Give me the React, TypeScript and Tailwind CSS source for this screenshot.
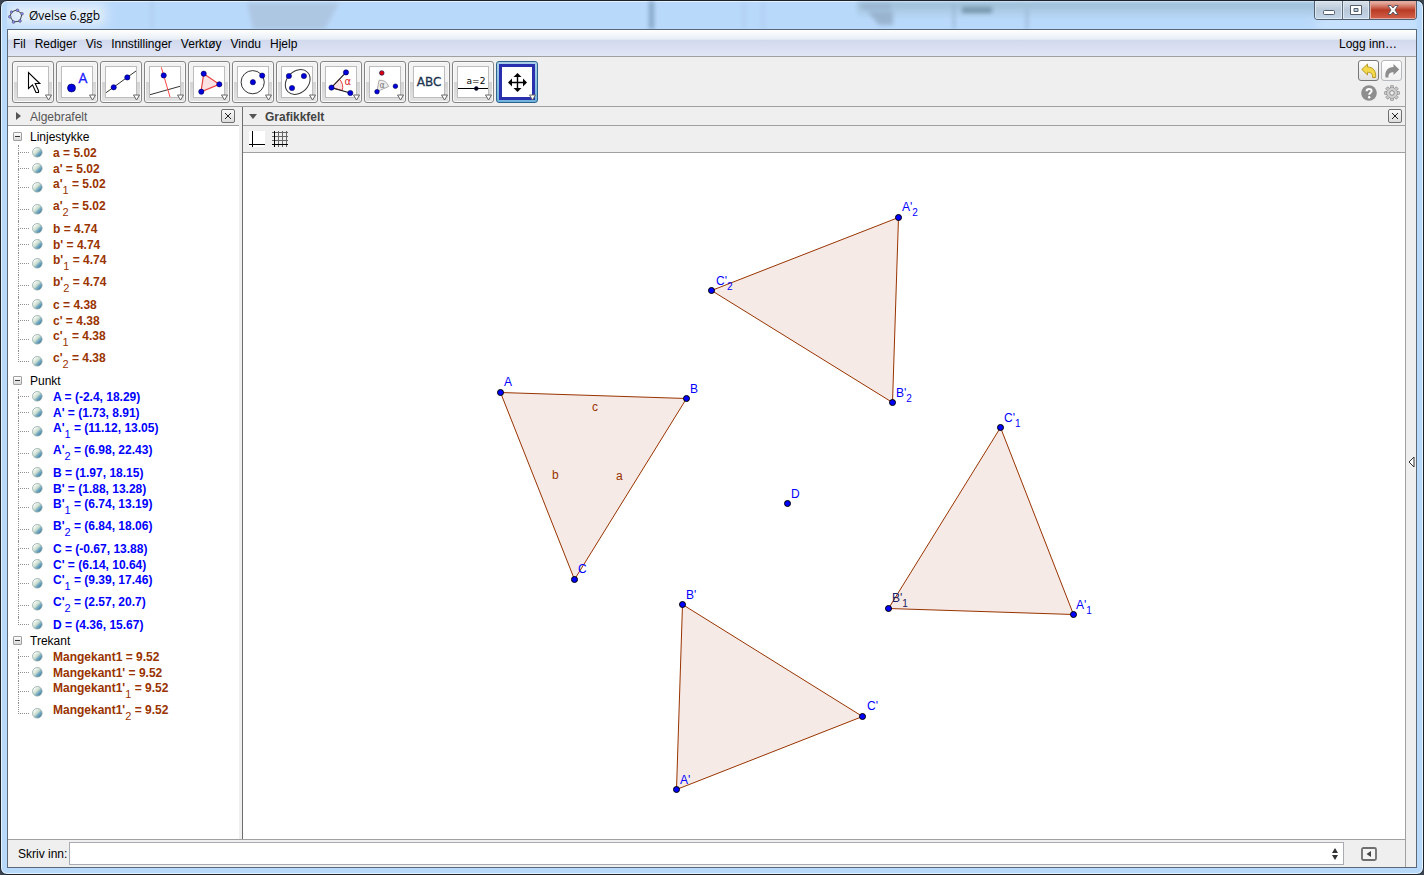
import { ReactNode } from "react";

interface TreeItem {
  name: string;
  sub?: string;
  value: string;
}

interface TreeGroup {
  title: string;
  color: string;
  items: TreeItem[];
}

interface PlotLabel {
  text: string;
  sub?: string;
  x: number;
  y: number;
  color?: string;
}

const menus = ["Fil", "Rediger", "Vis", "Innstillinger", "Verktøy", "Vindu", "Hjelp"];

const groups: TreeGroup[] = [
  {
    title: "Linjestykke",
    color: "text-[#993300]",
    items: [
      { name: "a", value: "5.02" },
      { name: "a'", value: "5.02" },
      { name: "a'", sub: "1", value: "5.02" },
      { name: "a'", sub: "2", value: "5.02" },
      { name: "b", value: "4.74" },
      { name: "b'", value: "4.74" },
      { name: "b'", sub: "1", value: "4.74" },
      { name: "b'", sub: "2", value: "4.74" },
      { name: "c", value: "4.38" },
      { name: "c'", value: "4.38" },
      { name: "c'", sub: "1", value: "4.38" },
      { name: "c'", sub: "2", value: "4.38" },
    ],
  },
  {
    title: "Punkt",
    color: "text-[#0000ff]",
    items: [
      { name: "A", value: "(-2.4, 18.29)" },
      { name: "A'", value: "(1.73, 8.91)" },
      { name: "A'", sub: "1", value: "(11.12, 13.05)" },
      { name: "A'", sub: "2", value: "(6.98, 22.43)" },
      { name: "B", value: "(1.97, 18.15)" },
      { name: "B'", value: "(1.88, 13.28)" },
      { name: "B'", sub: "1", value: "(6.74, 13.19)" },
      { name: "B'", sub: "2", value: "(6.84, 18.06)" },
      { name: "C", value: "(-0.67, 13.88)" },
      { name: "C'", value: "(6.14, 10.64)" },
      { name: "C'", sub: "1", value: "(9.39, 17.46)" },
      { name: "C'", sub: "2", value: "(2.57, 20.7)" },
      { name: "D", value: "(4.36, 15.67)" },
    ],
  },
  {
    title: "Trekant",
    color: "text-[#993300]",
    items: [
      { name: "Mangekant1", value: "9.52" },
      { name: "Mangekant1'", value: "9.52" },
      { name: "Mangekant1'", sub: "1", value: "9.52" },
      { name: "Mangekant1'", sub: "2", value: "9.52" },
    ],
  },
];

const triangles = [
  [[257.5, 239.5], [443.5, 245.5], [331.5, 426.5]],
  [[433.5, 636.5], [439.5, 451.5], [619.5, 563.5]],
  [[830.5, 461.5], [645.5, 455.5], [757.5, 274.5]],
  [[655.5, 64.5], [649.5, 249.5], [468.5, 137.5]],
];

const freePoint = [544.5, 350.5];

const labels: PlotLabel[] = [
  { text: "A", x: 261, y: 233 },
  { text: "B", x: 447, y: 240 },
  { text: "C", x: 335, y: 420 },
  { text: "D", x: 548, y: 345 },
  { text: "B'", x: 443, y: 446 },
  { text: "A'", x: 437, y: 631 },
  { text: "C'", x: 624, y: 557 },
  { text: "A'", sub: "2", x: 659, y: 58 },
  { text: "C'", sub: "2", x: 473, y: 132 },
  { text: "B'", sub: "2", x: 653, y: 244 },
  { text: "C'", sub: "1", x: 761, y: 269 },
  { text: "A'", sub: "1", x: 833, y: 456 },
  { text: "B'", sub: "1", x: 649, y: 449, color: "#202060" },
  { text: "c", x: 349, y: 258, color: "#993300" },
  { text: "b", x: 309, y: 326, color: "#993300" },
  { text: "a", x: 373, y: 327, color: "#993300" },
];

const Dot = ({ x, y, r = 2.6, fill = "#0000dd" }: { x: number; y: number; r?: number; fill?: string }) => (
  <circle cx={x} cy={y} r={r} fill={fill} stroke="#000050" strokeWidth="0.6" />
);

const tools: { label: string; active?: boolean; icon: ReactNode }[] = [
  {
    label: "Flytt",
    icon: (
      <path
        d="M16.5 11.5V27.5L20.5 23.8L24 31.5H26.5V29.5L23.2 22.5H27.8Z"
        fill="#fff"
        stroke="#000"
        strokeWidth="1.1"
      />
    ),
  },
  {
    label: "Nytt punkt",
    icon: (
      <>
        <Dot x={15.5} y={27} r={4} />
        <text x="22.5" y="21.5" fontSize="14" fontFamily="Open Sans, sans-serif" stroke="#1a1aff" strokeWidth="0.3" fill="#1a1aff">A</text>
      </>
    ),
  },
  {
    label: "Linje",
    icon: (
      <>
        <path d="M6 31.7L36 10" stroke="#333" />
        <Dot x={13.7} y={26.3} />
        <Dot x={27.3} y={16.4} />
      </>
    ),
  },
  {
    label: "Normal",
    icon: (
      <>
        <path d="M6 33.7L36 25.3" stroke="#333" />
        <path d="M17.3 6.3L26 36" stroke="#ff4444" />
        <Dot x={19.7} y={14.4} />
      </>
    ),
  },
  {
    label: "Mangekant",
    icon: (
      <>
        <path d="M15.7 12.7L31.3 23.3L13 30.7Z" fill="#fbe3e3" stroke="#e84040" strokeWidth="1.2" />
        <Dot x={15.7} y={12.7} />
        <Dot x={31.3} y={23.3} />
        <Dot x={13.3} y={30.7} />
      </>
    ),
  },
  {
    label: "Sirkel",
    icon: (
      <>
        <circle cx="20.7" cy="21.2" r="11.6" fill="none" stroke="#333" />
        <Dot x={20.9} y={21.2} />
        <Dot x={30.2} y={14.6} />
      </>
    ),
  },
  {
    label: "Ellipse",
    icon: (
      <>
        <ellipse cx="21.7" cy="21" rx="13.8" ry="10.8" transform="rotate(-45 21.7 21)" fill="none" stroke="#333" />
        <Dot x={12.9} y={15} />
        <Dot x={27.9} y={15} />
        <Dot x={16} y={27} />
      </>
    ),
  },
  {
    label: "Vinkel",
    icon: (
      <>
        <path d="M11.5 26.5L19.5 18.3A11.5 11.5 0 0 1 22.2 29.5Z" fill="#fbe3e3" stroke="#e84040" />
        <path d="M26 11.3L11.3 26.6L30.3 32" fill="none" stroke="#222" strokeWidth="1.2" />
        <text x="24.5" y="24" fontSize="10" fontFamily="DejaVu Sans, sans-serif" fill="#dd2222">α</text>
        <Dot x={11.5} y={26.6} />
        <Dot x={26} y={11.4} />
        <Dot x={30.3} y={32} />
      </>
    ),
  },
  {
    label: "Rotasjon",
    icon: (
      <>
        <path d="M13 30.5L15 19.3Q22 18.5 24.7 25.5Z" fill="#eee" stroke="#aaa" />
        <text x="15.5" y="27" fontSize="8" fontFamily="DejaVu Sans, sans-serif" fill="#777">α</text>
        <Dot x={17.8} y={12} r={2.3} fill="#dd0000" />
        <Dot x={13} y={30.7} r={2.3} />
        <Dot x={31.4} y={25.2} r={2.3} />
      </>
    ),
  },
  {
    label: "Tekst",
    icon: (
      <text x="21" y="25" textAnchor="middle" fontSize="12" fontFamily="DejaVu Sans, sans-serif" stroke="#1b3350" strokeWidth="0.3" fill="#1b3350">ABC</text>
    ),
  },
  {
    label: "Glider",
    icon: (
      <>
        <text x="24" y="23" textAnchor="middle" fontSize="9" fontFamily="DejaVu Sans, sans-serif" fill="#000">a=2</text>
        <path d="M6 27.5H36" stroke="#000" />
        <Dot x={24.3} y={27.5} r={1.9} fill="#000" />
      </>
    ),
  },
  {
    label: "Flytt grafikkfeltet",
    active: true,
    icon: (
      <>
        <path d="M13 21.5H30M21.5 13V30" stroke="#000" strokeWidth="1.4" />
        <path d="M12 21.5l4-4v8zM31 21.5l-4-4v8zM21.5 12l-4 4h8zM21.5 31l-4-4h8z" fill="#000" />
      </>
    ),
  },
];

const ToolButton = ({ label, active, icon }: { label: string; active?: boolean; icon: ReactNode }) => (
  <button
    aria-label={label}
    className={`relative grid size-[42px] place-items-center rounded-[3px] border ${
      active
        ? "border-[#2c628b] bg-linear-to-b from-[#a9cfe6] to-[#6fb4dc]"
        : "border-[#858585] bg-linear-to-b from-[#f2f2f2] from-50% via-[#d4d4d4] via-50% to-[#e2e2e2] shadow-[inset_0_0_0_1px_#fafafa]"
    }`}
  >
    <span
      className={
        active ? "size-9 border-3 border-[#2a2fae] bg-white" : "size-8 border border-[#bdbdbd] bg-white"
      }
    />
    <svg viewBox="0 0 42 42" className="absolute -top-px -left-px size-[42px]" fill="none">
      {icon}
      <path d="M33.5 34H39.5L36.5 39Z" fill="#fff" stroke="#666" />
    </svg>
  </button>
);

const CloseBox = ({ label }: { label: string }) => (
  <button
    aria-label={label}
    className="grid size-[14px] place-items-center rounded-[2px] border border-[#707070] bg-linear-to-b from-[#f8f8f8] to-[#dcdcdc]"
  >
    <svg viewBox="0 0 8 8" className="size-2" stroke="#222">
      <path d="M1 1L7 7M7 1L1 7" />
    </svg>
  </button>
);

const TreeRow = ({ item, color, last }: { item: TreeItem; color: string; last: boolean }) => (
  <li className={`flex items-start pl-[10px] ${item.sub ? "h-[22px]" : "h-4"}`}>
    <span className="flex w-[11px] flex-col self-stretch">
      <span className="h-1/2 border-b border-l border-dotted border-[#909090]" />
      <span className={`h-1/2 border-[#909090] ${last ? "" : "border-l border-dotted"}`} />
    </span>
    <button aria-label={`Vis ${item.name}${item.sub ?? ""}`} className={`ml-[3px] ${item.sub ? "mt-[5px]" : "mt-[2px]"}`}>
      <svg viewBox="0 0 11 11" className="block size-[11px]">
        <circle cx="5.3" cy="5.3" r="4.8" fill="url(#marble)" stroke="#8fa9a4" strokeWidth="0.8" />
      </svg>
    </button>
    <span className={`ml-[10px] font-bold whitespace-nowrap ${item.sub ? "leading-[15px]" : "leading-4"} ${color}`}>
      {item.name}
      {item.sub && <sub className="relative top-[6px] bottom-auto align-baseline text-[11px] leading-none font-normal">{item.sub}</sub>}
      {" = "}
      {item.value}
    </span>
  </li>
);

const AlgebraView = () => (
  <section className="flex w-[231px] shrink-0 flex-col bg-white">
    <header className="flex h-[19px] items-center border-b border-[#a0a0a0] bg-[#efefef] pr-[4px] pl-2">
      <svg viewBox="0 0 5 8" className="h-2 w-[5px]" fill="#555">
        <path d="M0 0L5 4L0 8Z" />
      </svg>
      <h2 className="ml-[9px] flex-1 pt-px text-[#555]">Algebrafelt</h2>
      <CloseBox label="Lukk algebrafelt" />
    </header>
    <div className="flex-1 pt-[3px]">
      {groups.map((group) => (
        <div key={group.title}>
          <div className="flex h-4 items-start pl-[5px]">
            <button
              aria-label={`Skjul ${group.title}`}
              className="mt-[3px] grid size-[9px] place-items-center rounded-[1px] border border-[#a0a0a0] bg-linear-to-b from-white to-[#d8d8d8]"
            >
              <span className="h-px w-[5px] bg-[#333]" />
            </button>
            <h3 className="ml-2 leading-4">{group.title}</h3>
          </div>
          <ul>
            {group.items.map((item, index) => (
              <TreeRow key={index} item={item} color={group.color} last={index === group.items.length - 1} />
            ))}
          </ul>
        </div>
      ))}
    </div>
  </section>
);

const GraphicsView = () => (
  <section className="flex min-w-0 flex-1 flex-col border-l border-[#6d6d6d] bg-white">
    <header className="flex h-[19px] shrink-0 items-center border-b border-[#a0a0a0] bg-[#efefef] pr-[3px] pl-[6px]">
      <svg viewBox="0 0 8 5" className="h-[5px] w-2" fill="#555">
        <path d="M0 0H8L4 5Z" />
      </svg>
      <h2 className="ml-2 flex-1 pt-px font-bold text-[#444]">Grafikkfelt</h2>
      <CloseBox label="Lukk grafikkfelt" />
    </header>
    <div className="flex h-[27px] shrink-0 items-center gap-[7px] border-b border-[#a0a0a0] bg-[#efefef] pl-[6px]">
      <button aria-label="Akser" className="size-4 bg-white">
        <svg viewBox="0 0 16 16" className="size-4" stroke="#000">
          <path d="M3.5 0V16M0 13.5H16" />
        </svg>
      </button>
      <button aria-label="Rutenett" className="size-4">
        <svg viewBox="0 0 16 16" className="size-4" stroke="#666">
          <path d="M6.5 0V16M10.5 0V16M14.5 0V16M0 1.5H16M0 5.5H16M0 9.5H16" />
          <path d="M2.5 0V16M0 13.5H16" stroke="#000" />
        </svg>
      </button>
    </div>
    <div className="min-h-0 flex-1">
      <svg className="block h-full w-full" fontFamily="Liberation Sans, Arial, sans-serif" fontSize="12">
        {triangles.map((points, index) => (
          <polygon key={index} points={points.join(" ")} fill="#f5eae6" stroke="#993300" />
        ))}
        {[...triangles.flat(), freePoint].map(([x, y], index) => (
          <circle key={index} cx={x} cy={y} r="3" fill="#0000ff" stroke="#000" />
        ))}
        {labels.map((label, index) => (
          <text key={index} x={label.x} y={label.y} fill={label.color ?? "#0000ff"}>
            {label.text}
            {label.sub && <tspan dy="5" fontSize="10">{label.sub}</tspan>}
          </text>
        ))}
      </svg>
    </div>
  </section>
);

const TitleBar = () => (
  <header className="relative flex h-7 shrink-0 items-start">
    {/* Blurred desktop behind the glass */}
    <svg className="absolute inset-0 h-full w-full" preserveAspectRatio="none" viewBox="0 0 1410 28">
      <defs>
        <filter id="haze" x="-20%" y="-20%" width="140%" height="140%">
          <feGaussianBlur stdDeviation="2" />
        </filter>
        <filter id="glow" x="-50%" y="-50%" width="200%" height="200%">
          <feGaussianBlur stdDeviation="6" />
        </filter>
        <linearGradient id="shade" x1="0" y1="0" x2="0" y2="1">
          <stop offset="0" stopColor="#9dbdd2" />
          <stop offset="1" stopColor="#9dbdd2" stopOpacity="0" />
        </linearGradient>
      </defs>
      <path d="M240 2H332L318 28H246Z" fill="#adc6e2" filter="url(#haze)" />
      <path d="M850 1H1330V18H850Z" fill="url(#shade)" filter="url(#haze)" />
      <g filter="url(#haze)">
        <path d="M642 0H647V28H642Z" fill="#86a6c8" />
        <path d="M855 3H884V8H855ZM860 10H886V24H872Z" fill="#98b4cf" />
        <path d="M955 6H985V12H955Z" fill="#7695ac" />
        <path d="M946 4H948V28H946ZM1019 8H1021V28H1019Z" fill="#93b2d0" />
        <path d="M736 2H738V28H736ZM755 2H757V28H755ZM144 0H146V28H144Z" fill="#a8c8ea" />
      </g>
      <g filter="url(#glow)">
        <path d="M0 3H98V24H0Z" fill="#e4effc" />
        <path d="M1310 20H1410V28H1310Z" fill="#d4e9ff" />
      </g>
    </svg>
    <div className="relative flex h-7 flex-1 items-center gap-[5px] pt-px pl-px">
      <svg viewBox="0 0 16 16" className="size-4" fill="none">
        <path d="M8.5 2L14 5.8L12 13L5.5 14L2 8.5L3.5 4Z" stroke="#444" strokeWidth="1" />
        <g fill="#8c8cff" stroke="#444" strokeWidth="0.5">
          <circle cx="9.5" cy="2.3" r="1.4" />
          <circle cx="14" cy="5.8" r="1.4" />
          <circle cx="12" cy="13" r="1.4" />
          <circle cx="5.5" cy="14" r="1.4" />
          <circle cx="1.8" cy="8.8" r="1.4" />
          <circle cx="3.5" cy="4" r="1.2" />
        </g>
      </svg>
      <h1 className="font-['Open_Sans',sans-serif] text-[12px]">Øvelse 6.ggb</h1>
    </div>
    <div className="relative flex h-[19px] overflow-hidden rounded-b-[4px] border border-t-0 border-[#4f5e70]">
      <button aria-label="Minimer" className="grid w-7 place-items-center border-r border-[#5c6b7d] bg-linear-to-b from-[#d9e2eb] via-[#b9c9d9] via-50% to-[#c3d6e8] shadow-[inset_0_0_0_1px_#dfe9f2]">
        <svg viewBox="0 0 14 12" className="h-3 w-[14px]">
          <rect x="1.5" y="6.5" width="11" height="4" rx="1" fill="#fff" stroke="#555e6c" />
        </svg>
      </button>
      <button aria-label="Maksimer" className="grid w-[27px] place-items-center border-r border-[#5c6b7d] bg-linear-to-b from-[#d9e2eb] via-[#b9c9d9] via-50% to-[#c3d6e8] shadow-[inset_0_0_0_1px_#dfe9f2]">
        <svg viewBox="0 0 12 12" className="size-3">
          <path d="M0.5 1.5H11.5V10.5H0.5ZM4 4.5V7.5H8V4.5Z" fill="#fff" fillRule="evenodd" stroke="#555e6c" />
        </svg>
      </button>
      <button aria-label="Lukk" className="grid w-[46px] place-items-center bg-linear-to-b from-[#e2a99c] from-10% via-[#b93a24] via-50% to-[#d4614a] shadow-[inset_0_0_0_1px_#e3a99c]">
        <svg viewBox="0 0 12 12" className="size-3">
          <path d="M1 1.5H4L6 4L8 1.5H11L8 6L11 10.5H8L6 8L4 10.5H1L4 6Z" fill="#fff" stroke="#4d5060" strokeWidth="0.9" />
        </svg>
      </button>
    </div>
  </header>
);

const gearTeeth = [0, 45, 90, 135];

const App = () => {
  return (
    <div className="h-screen bg-[#3b4552] font-['Liberation_Sans',Arial,sans-serif] text-[12px] leading-4 text-black">
      <svg className="absolute size-0">
        <defs>
          <linearGradient id="marble" x1="0" y1="0" x2="1" y2="1">
            <stop offset="0.15" stopColor="#ffffff" />
            <stop offset="0.48" stopColor="#c9dccb" />
            <stop offset="0.6" stopColor="#7fb0c6" />
            <stop offset="1" stopColor="#1f6496" />
          </linearGradient>
        </defs>
      </svg>
      <div className="flex h-full flex-col rounded-[7px] border border-[#1c232c] bg-[#b9d9fb] px-[6px] pb-[6px] shadow-[inset_0_0_0_1px_#e6f3ff]">
        <TitleBar />
        <div className="flex min-h-0 flex-1 flex-col border border-[#59687a] bg-[#efefef]">
          <nav className="flex h-[27px] shrink-0 items-center justify-between border-b border-[#a0a0a0] bg-[linear-gradient(to_bottom,#ffffff,#e8eef6_36%,#d2d9ed_38%,#e1e6f6)] pt-[2px] pr-[19px] pl-[5px]">
            <div className="flex gap-[9px]">
              {menus.map((menu) => (
                <button key={menu}>{menu}</button>
              ))}
            </div>
            <button>Logg inn…</button>
          </nav>
          <div className="flex min-h-0 flex-1">
            <main className="flex min-w-0 flex-1 flex-col">
              <div className="flex h-[50px] shrink-0 items-center justify-between border-b border-[#a0a0a0] pr-[3px] pl-1">
                <div className="flex gap-[2px]">
                  {tools.map((tool) => (
                    <ToolButton key={tool.label} {...tool} />
                  ))}
                </div>
                <div className="mt-[3px] grid grid-cols-2 place-items-center gap-x-[2px] gap-y-1 self-start">
                  <button aria-label="Angre" className="grid size-[21px] place-items-center rounded-[3px] border border-[#777] bg-linear-to-b from-white to-[#e0e0e0]">
                    <svg viewBox="0 0 16 16" className="size-4">
                      <path d="M0.8 6.5L6.5 1V4C12 4 15.5 8 14.5 14.5H11.5C12 11 10 9.3 6.5 9.3V12Z" fill="#f2d84a" stroke="#a98c12" strokeWidth="0.8" />
                    </svg>
                  </button>
                  <button aria-label="Gjør om" className="grid size-[21px] place-items-center rounded-[3px] border border-[#b5b9be] bg-linear-to-b from-white to-[#f0f0f0]">
                    <svg viewBox="0 0 16 16" className="size-4">
                      <path d="M15.2 6.5L9.5 1V4C4 4 0.5 8 1.5 14.5H4.5C4 11 6 9.3 9.5 9.3V12Z" fill="#8d8d8d" />
                    </svg>
                  </button>
                  <button aria-label="Hjelp">
                    <svg viewBox="0 0 16 16" className="block size-4">
                      <circle cx="8" cy="8" r="7.8" fill="#8e8e8e" />
                      <path d="M5.6 6.2C5.6 3.2 10.6 3.2 10.6 6C10.6 7.8 8.2 7.8 8.2 9.8" fill="none" stroke="#fff" strokeWidth="2" />
                      <circle cx="8.2" cy="12.2" r="1.2" fill="#fff" />
                    </svg>
                  </button>
                  <button aria-label="Innstillinger">
                    <svg viewBox="0 0 16 16" className="block size-4">
                      {gearTeeth.map((angle) => (
                        <rect key={angle} x="6.5" y="0.5" width="3" height="15" rx="0.8" fill="#ccc" stroke="#8b8b8b" strokeWidth="0.8" transform={`rotate(${angle} 8 8)`} />
                      ))}
                      <circle cx="8" cy="8" r="5.2" fill="#cfcfcf" stroke="#8b8b8b" strokeWidth="0.8" />
                      <circle cx="8" cy="8" r="5" fill="#cfcfcf" />
                      <circle cx="8" cy="8" r="2.3" fill="#efefef" stroke="#8b8b8b" />
                    </svg>
                  </button>
                </div>
              </div>
              <div className="flex min-h-0 flex-1 gap-[3px] border-b border-[#a0a0a0]">
                <AlgebraView />
                <GraphicsView />
              </div>
              <div className="flex h-[27px] shrink-0 items-center pl-[10px]">
                <label htmlFor="command" className="whitespace-nowrap">Skriv inn:</label>
                <div className="ml-[2px] flex h-[23px] flex-1 items-center border border-[#a9abb3] bg-white pr-1">
                  <input id="command" type="text" className="h-full min-w-0 flex-1 px-1 outline-none" />
                  <button aria-label="Historikk">
                    <svg viewBox="0 0 8 12" className="h-3 w-2" fill="#333">
                      <path d="M4 0L7 5H1ZM4 12L1 7H7Z" />
                    </svg>
                  </button>
                </div>
                <button aria-label="Kommandoer" className="mr-[28px] ml-[17px]">
                  <svg viewBox="0 0 16 14" className="block h-[14px] w-4">
                    <rect x="1" y="1" width="14" height="12" rx="1.5" fill="#f4f4f4" stroke="#6e6e6e" strokeWidth="1.8" />
                    <path d="M10 4V10L5.5 7Z" fill="#444" />
                  </svg>
                </button>
              </div>
            </main>
            <aside className="grid w-[11px] shrink-0 place-items-center border-l border-[#a0a0a0]">
              <button aria-label="Åpne sidefelt">
                <svg viewBox="0 0 7 12" className="h-3 w-[7px]">
                  <path d="M6 1V11L1 6Z" fill="#fff" stroke="#333" />
                </svg>
              </button>
            </aside>
          </div>
        </div>
      </div>
    </div>
  );
};

export default App;
